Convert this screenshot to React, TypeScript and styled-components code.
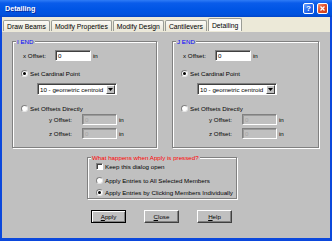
import { FC } from "react";
import styled, { createGlobalStyle, css } from "styled-components";

const GlobalStyle = createGlobalStyle`
  html, body {
    margin: 0;
    padding: 0;
    background: #ffffff;
  }

  body {
    font-family: "Liberation Sans", Arial, sans-serif;
    font-size: 6.2px;
    color: #000000;
  }
`;

const Window = styled.div`
  width: 332px;
  height: 241px;
  display: flex;
  flex-direction: column;
  overflow: hidden;
`;

const TitleBar = styled.div`
  height: 17px;
  flex: none;
  display: flex;
  align-items: center;
  padding: 0 4px 0 5px;
  box-sizing: border-box;
  background: linear-gradient(
    to bottom,
    #2f7cf6 0%,
    #0a5cea 18%,
    #0055e5 55%,
    #0052de 85%,
    #0145c8 100%
  );
`;

const Title = styled.span`
  color: #ffffff;
  font-weight: bold;
  font-size: 7.2px;
  text-shadow: 1px 1px 0 #0a2a9a;
`;

const Controls = styled.div`
  margin-left: auto;
  display: flex;
  gap: 3px;
`;

const ControlButton = styled.span<{ $variant: "help" | "close" }>`
  width: 11px;
  height: 11px;
  box-sizing: border-box;
  border: 1px solid #ffffff;
  border-radius: 2px;
  display: flex;
  align-items: center;
  justify-content: center;
  color: #ffffff;
  font-weight: bold;
  font-size: 8px;
  background: ${(p) =>
    p.$variant === "close"
      ? "linear-gradient(135deg, #f3977a 0%, #e2502c 45%, #c83a14 100%)"
      : "linear-gradient(135deg, #6ea4ff 0%, #2d6ff0 45%, #1b56d6 100%)"};
`;

const Frame = styled.div`
  flex: 1;
  min-height: 0;
  display: flex;
  flex-direction: column;
  border: solid #0b48dc;
  border-width: 0 2px 3px 2px;
`;

const TabStrip = styled.div`
  height: 15px;
  flex: none;
  display: flex;
  align-items: flex-end;
  padding: 0 0 1px 1px;
  box-sizing: border-box;
  background: #ece9d8;
`;

const Tab = styled.div<{ $active?: boolean }>`
  height: ${(p) => (p.$active ? 13 : 11)}px;
  padding: 0 3px;
  box-sizing: border-box;
  display: flex;
  align-items: center;
  font-size: 6.8px;
  border: 1px solid #9a9c96;
  border-bottom: none;
  border-radius: 2px 2px 0 0;
  margin-right: 1px;
  background: ${(p) =>
    p.$active ? "#fbfaf6" : "linear-gradient(to bottom, #fbfaf5, #e9e6d8)"};
`;

const Page = styled.div`
  flex: 1;
  display: flex;
  flex-direction: column;
  padding: 9px 11px 0 10px;
  background: #c0c0c0;
`;

const GroupsRow = styled.div`
  display: grid;
  grid-template-columns: 145px 147px;
  column-gap: 15px;
`;

const GroupBox = styled.div`
  position: relative;
  display: flex;
  flex-direction: column;
  align-items: flex-start;
  padding: 0 8px 8px 8px;
  border: 1px solid #808080;
  box-shadow: inset 1px 1px 0 #ffffff, 1px 1px 0 #ffffff;
`;

const GroupLabel = styled.span<{ $color: string }>`
  position: absolute;
  top: -4px;
  left: 3px;
  padding: 0 1px;
  line-height: 7px;
  white-space: nowrap;
  background: #c0c0c0;
  color: ${(p) => p.$color};
`;

const FieldRow = styled.div<{ $indent: number; $top: number }>`
  display: flex;
  align-items: center;
  height: 11px;
  margin: ${(p) => p.$top}px 0 0 ${(p) => p.$indent}px;
`;

const FieldLabel = styled.span<{ $width: number }>`
  width: ${(p) => p.$width}px;
  flex: none;
  white-space: nowrap;
`;

const TextField = styled.span<{ $width: number; $disabled?: boolean }>`
  width: ${(p) => p.$width}px;
  height: 11px;
  box-sizing: border-box;
  display: flex;
  align-items: center;
  padding-left: 2px;
  border: 1px solid;
  border-color: #808080 #ffffff #ffffff #808080;
  box-shadow: inset 1px 1px 0 #404040;
  background: ${(p) => (p.$disabled ? "#c0c0c0" : "#ffffff")};
  color: ${(p) => (p.$disabled ? "#a4a4a4" : "#000000")};
  ${(p) =>
    p.$disabled &&
    css`
      box-shadow: inset 1px 1px 0 #9a9a9a;
    `}
`;

const Unit = styled.span`
  margin-left: 2px;
`;

const OptionRow = styled.div<{ $top: number }>`
  display: flex;
  align-items: center;
  height: 9px;
  margin-top: ${(p) => p.$top}px;
  white-space: nowrap;
`;

const Radio = styled.span<{ $checked?: boolean }>`
  width: 7px;
  height: 7px;
  flex: none;
  box-sizing: border-box;
  margin-right: 2px;
  border-radius: 50%;
  border: 1px solid;
  border-color: #808080 #e4e4e4 #e4e4e4 #808080;
  background: #ffffff;
  display: flex;
  align-items: center;
  justify-content: center;

  &::after {
    content: "";
    width: 3px;
    height: 3px;
    border-radius: 50%;
    background: #000000;
    display: ${(p) => (p.$checked ? "block" : "none")};
  }
`;

const CheckBox = styled.span`
  width: 7px;
  height: 7px;
  flex: none;
  box-sizing: border-box;
  margin-right: 2px;
  border: 1px solid;
  border-color: #808080 #ffffff #ffffff #808080;
  box-shadow: inset 1px 1px 0 #404040;
  background: #ffffff;
`;

const Select = styled.div`
  width: 80px;
  height: 12px;
  margin: 5px 0 0 16px;
  box-sizing: border-box;
  display: flex;
  align-items: center;
  padding: 0 1px 0 2px;
  border: 1px solid;
  border-color: #808080 #ffffff #ffffff #808080;
  box-shadow: inset 1px 1px 0 #404040;
  background: #ffffff;
  white-space: nowrap;
`;

const SelectArrow = styled.span`
  margin-left: auto;
  width: 9px;
  height: 9px;
  box-sizing: border-box;
  display: flex;
  align-items: center;
  justify-content: center;
  border: 1px solid;
  border-color: #ffffff #404040 #404040 #ffffff;
  background: #c0c0c0;
`;

const ApplyGroup = styled(GroupBox)`
  width: 150px;
  height: 42px;
  box-sizing: border-box;
  margin: 9px 0 0 75px;
  padding: 0 0 0 8px;
`;

const ButtonRow = styled.div`
  display: flex;
  gap: 18px;
  margin: 11px 0 0 79px;
`;

const PushButton = styled.div<{ $default?: boolean }>`
  width: 35px;
  height: 13px;
  box-sizing: border-box;
  display: flex;
  align-items: center;
  justify-content: center;
  background: #c0c0c0;
  border: 1px solid;
  border-color: #ffffff #404040 #404040 #ffffff;
  box-shadow: inset -1px -1px 0 #808080;
  ${(p) =>
    p.$default &&
    css`
      border-color: #000000;
      box-shadow: inset 1px 1px 0 #ffffff, inset -1px -1px 0 #808080;
    `}
`;

const Accel = styled.span`
  text-decoration: underline;
`;

type EndProps = {
  label: string;
};

const EndPanel: FC<EndProps> = ({ label }) => (
  <GroupBox>
    <GroupLabel $color="#0000ff">{label}</GroupLabel>
    <FieldRow $indent={2} $top={8}>
      <FieldLabel $width={32}>x Offset:</FieldLabel>
      <TextField $width={36}>0</TextField>
      <Unit>in</Unit>
    </FieldRow>
    <OptionRow $top={8}>
      <Radio $checked />
      Set Cardinal Point
    </OptionRow>
    <Select>
      10 - geometric centroid
      <SelectArrow>
        <svg width="5" height="3" viewBox="0 0 5 3">
          <polygon points="0,0 5,0 2.5,3" fill="#000" />
        </svg>
      </SelectArrow>
    </Select>
    <OptionRow $top={9}>
      <Radio />
      Set Offsets Directly
    </OptionRow>
    <FieldRow $indent={28} $top={1}>
      <FieldLabel $width={33}>y Offset:</FieldLabel>
      <TextField $width={35} $disabled>
        0
      </TextField>
      <Unit>in</Unit>
    </FieldRow>
    <FieldRow $indent={28} $top={3}>
      <FieldLabel $width={33}>z Offset:</FieldLabel>
      <TextField $width={35} $disabled>
        0
      </TextField>
      <Unit>in</Unit>
    </FieldRow>
  </GroupBox>
);

const tabs = [
  "Draw Beams",
  "Modify Properties",
  "Modify Design",
  "Cantilevers",
  "Detailing",
];

const App: FC = () => {
  return (
    <>
      <GlobalStyle />
      <Window>
        <TitleBar>
          <Title>Detailing</Title>
          <Controls>
            <ControlButton $variant="help">?</ControlButton>
            <ControlButton $variant="close">
              <svg width="5" height="5" viewBox="0 0 5 5">
                <path
                  d="M0.5 0.5 L4.5 4.5 M4.5 0.5 L0.5 4.5"
                  stroke="#fff"
                  strokeWidth="1.3"
                />
              </svg>
            </ControlButton>
          </Controls>
        </TitleBar>
        <Frame>
          <TabStrip>
            {tabs.map((t) => (
              <Tab key={t} $active={t === "Detailing"}>
                {t}
              </Tab>
            ))}
          </TabStrip>
          <Page>
            <GroupsRow>
              <EndPanel label="I END" />
              <EndPanel label="J END" />
            </GroupsRow>
            <ApplyGroup>
              <GroupLabel $color="#ff0000">
                What happens when Apply is pressed?
              </GroupLabel>
              <OptionRow $top={4}>
                <CheckBox />
                Keep this dialog open
              </OptionRow>
              <OptionRow $top={5}>
                <Radio />
                Apply Entries to All Selected Members
              </OptionRow>
              <OptionRow $top={3}>
                <Radio $checked />
                Apply Entries by Clicking Members Individually
              </OptionRow>
            </ApplyGroup>
            <ButtonRow>
              <PushButton $default>
                <span>
                  <Accel>A</Accel>pply
                </span>
              </PushButton>
              <PushButton>
                <span>
                  <Accel>C</Accel>lose
                </span>
              </PushButton>
              <PushButton>
                <span>
                  <Accel>H</Accel>elp
                </span>
              </PushButton>
            </ButtonRow>
          </Page>
        </Frame>
      </Window>
    </>
  );
};

export default App;
